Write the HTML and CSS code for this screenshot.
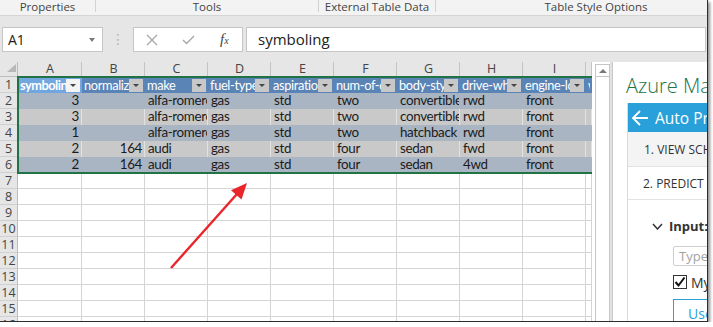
FILE: index.html
```html
<!DOCTYPE html>
<html lang="en">

<head>
  <meta charset="UTF-8">
  <title>Auto Price - Excel</title>
  <link rel="stylesheet" href="styles.css">
</head>

<body>
  <div class="window">
    <div class="groups">
      <span class="grp g1">Properties</span>
      <span class="grp g2">Tools</span>
      <span class="grp g3">External Table Data</span>
      <span class="grp g4">Table Style Options</span>
    </div>

    <div class="fbar">
      <div class="namebox"><span>A1</span><i class="caret"></i></div>
      <div class="dots">⋮</div>
      <div class="fbtns">
        <svg width="12" height="12" viewBox="0 0 12 12"><path d="M1 1L11 11M11 1L1 11" stroke="#a6a6a6" stroke-width="1.2" fill="none"/></svg>
        <svg width="13" height="10" viewBox="0 0 13 10"><path d="M1 5L4.5 8.5L12 1" stroke="#a6a6a6" stroke-width="1.3" fill="none"/></svg>
        <span class="fx">f<small>x</small></span>
      </div>
      <div class="finput">symboling</div>
    </div>

    <div class="main">
      <div class="sheet">
        <div class="row colhead">
          <div class="corner"></div>
          <div>A</div><div>B</div><div>C</div><div>D</div><div>E</div><div>F</div><div>G</div><div>H</div><div>I</div><div></div>
        </div>

        <div class="tbl">
          <div class="row thead">
            <div class="rh">1</div>
            <div class="th active"><span>symboling</span><b class="fb"></b></div>
            <div class="th"><span>normalized-losses</span><b class="fb"></b></div>
            <div class="th"><span>make</span><b class="fb"></b></div>
            <div class="th"><span>fuel-type</span><b class="fb"></b></div>
            <div class="th"><span>aspiration</span><b class="fb"></b></div>
            <div class="th"><span>num-of-doors</span><b class="fb"></b></div>
            <div class="th"><span>body-style</span><b class="fb"></b></div>
            <div class="th"><span>drive-wheels</span><b class="fb"></b></div>
            <div class="th"><span>engine-location</span><b class="fb"></b></div>
            <div class="th"><span>wheel-base</span></div>
          </div>
          <div class="row band1">
            <div class="rh">2</div>
            <div class="num">3</div><div class="num"></div><div>alfa-romero</div><div>gas</div><div>std</div><div>two</div><div>convertible</div><div>rwd</div><div>front</div><div></div>
          </div>
          <div class="row band2">
            <div class="rh">3</div>
            <div class="num">3</div><div class="num"></div><div>alfa-romero</div><div>gas</div><div>std</div><div>two</div><div>convertible</div><div>rwd</div><div>front</div><div></div>
          </div>
          <div class="row band1">
            <div class="rh">4</div>
            <div class="num">1</div><div class="num"></div><div>alfa-romero</div><div>gas</div><div>std</div><div>two</div><div>hatchback</div><div>rwd</div><div>front</div><div></div>
          </div>
          <div class="row band2">
            <div class="rh">5</div>
            <div class="num">2</div><div class="num">164</div><div>audi</div><div>gas</div><div>std</div><div>four</div><div>sedan</div><div>fwd</div><div>front</div><div></div>
          </div>
          <div class="row band1">
            <div class="rh">6</div>
            <div class="num">2</div><div class="num">164</div><div>audi</div><div>gas</div><div>std</div><div>four</div><div>sedan</div><div>4wd</div><div>front</div><div></div>
          </div>
        </div>

        <div class="row"><div class="rh">7</div><div></div><div></div><div></div><div></div><div></div><div></div><div></div><div></div><div></div><div></div></div>
        <div class="row"><div class="rh">8</div><div></div><div></div><div></div><div></div><div></div><div></div><div></div><div></div><div></div><div></div></div>
        <div class="row"><div class="rh">9</div><div></div><div></div><div></div><div></div><div></div><div></div><div></div><div></div><div></div><div></div></div>
        <div class="row"><div class="rh">10</div><div></div><div></div><div></div><div></div><div></div><div></div><div></div><div></div><div></div><div></div></div>
        <div class="row"><div class="rh">11</div><div></div><div></div><div></div><div></div><div></div><div></div><div></div><div></div><div></div><div></div></div>
        <div class="row"><div class="rh">12</div><div></div><div></div><div></div><div></div><div></div><div></div><div></div><div></div><div></div><div></div></div>
        <div class="row"><div class="rh">13</div><div></div><div></div><div></div><div></div><div></div><div></div><div></div><div></div><div></div><div></div></div>
        <div class="row"><div class="rh">14</div><div></div><div></div><div></div><div></div><div></div><div></div><div></div><div></div><div></div><div></div></div>
        <div class="row"><div class="rh">15</div><div></div><div></div><div></div><div></div><div></div><div></div><div></div><div></div><div></div><div></div></div>
        <div class="row"><div class="rh">16</div><div></div><div></div><div></div><div></div><div></div><div></div><div></div><div></div><div></div><div></div></div>

        <!-- red annotation arrow drawn over the sheet -->
        <svg class="arrow" width="100" height="100" viewBox="0 0 100 100">
          <line x1="11" y1="91" x2="77" y2="17" stroke="#e8262c" stroke-width="2.4"/>
          <polygon points="87,6 81.5,22.5 71,13.3" fill="#e8262c"/>
        </svg>
      </div>

      <div class="vscroll"><div class="up"></div></div>
      <div class="gutter"></div>

      <div class="pane">
        <div class="ptitle">Azure Machine Learning</div>
        <div class="pbox">
          <div class="phead">
            <svg width="18" height="18" viewBox="0 0 18 18"><path d="M17 9H2M9 2L2 9L9 16" stroke="#fff" stroke-width="1.8" fill="none"/></svg>
            <span>Auto Price Prediction</span>
          </div>
          <div class="tab tab-on">1. VIEW SCHEMA</div>
          <div class="tab">2. PREDICT</div>
          <div class="pbody">
            <div class="inp-h">
              <svg width="11" height="7" viewBox="0 0 11 7"><path d="M1 1L5.5 6L10 1" stroke="#333" stroke-width="1.5" fill="none"/></svg>
              <b>Input:</b><span>input1</span>
            </div>
            <div class="tbox">Type or paste</div>
            <div class="chk">
              <svg class="cb" width="14" height="14" viewBox="0 0 14 14"><rect x="0.5" y="0.5" width="13" height="13" fill="#fff" stroke="#333"/><path d="M2.5 7L5.5 10.5L11.5 2.5" stroke="#111" stroke-width="2" fill="none"/></svg>
              <span>My data has headers</span>
            </div>
            <div class="btn">Use sample data</div>
          </div>
        </div>
      </div>
    </div>
  </div>
</body>

</html>
```

FILE: styles.css
```css
* {
  box-sizing: border-box;
}

body {
  margin: 0;
  background: #fff;
  font-family: "Open Sans", "Noto Sans", sans-serif;
}

.window {
  width: 708px;
  height: 322px;
  border-right: 1px solid #2e2e2e;
  border-bottom: 1px solid #2e2e2e;
  box-shadow: 2px 2px 3px rgba(0, 0, 0, 0.45);
  background: #e6e6e6;
  overflow: hidden;
  display: flex;
  flex-direction: column;
}

/* ribbon group captions */
.groups {
  display: flex;
  height: 16px;
  background: #f3f3f3;
  border-bottom: 1px solid #d5d5d5;
  font-size: 11.5px;
  color: #444;
  white-space: nowrap;
  flex: none;
}

.grp {
  height: 12px;
  line-height: 13px;
  text-align: center;
  border-right: 1px solid #d2d2d2;
  flex: none;
}

.g1 { width: 96px; }
.g2 { width: 223px; }
.g3 { width: 117px; }
.g4 { width: 320px; border-right: 0; }

/* formula bar */
.fbar {
  display: flex;
  height: 46px;
  padding: 11px 1px 10px 2px;
  flex: none;
}

.namebox {
  width: 101px;
  background: #fff;
  border: 1px solid #c6c6c6;
  display: flex;
  align-items: center;
  justify-content: space-between;
  padding: 0 7px 0 5px;
  font-size: 14px;
  color: #222;
}

.caret {
  border-left: 3.5px solid transparent;
  border-right: 3.5px solid transparent;
  border-top: 4px solid #7a7a7a;
}

.dots {
  width: 30px;
  text-align: center;
  color: #b4b4b4;
  font-family: "DejaVu Sans", sans-serif;
  font-size: 14px;
  line-height: 25px;
}

.fbtns {
  width: 110px;
  background: #fff;
  border: 1px solid #c6c6c6;
  display: flex;
  align-items: center;
  gap: 24px;
  padding-left: 12px;
}

.fx {
  font-family: "Liberation Serif", serif;
  font-style: italic;
  font-size: 15px;
  color: #444;
  margin-left: 1px;
}

.fx small {
  font-size: 10px;
}

.finput {
  flex: 1;
  margin-left: 3px;
  background: #fff;
  border: 1px solid #c6c6c6;
  padding-left: 11px;
  font-size: 15px;
  line-height: 23px;
  color: #222;
}

/* sheet area */
.main {
  flex: 1;
  display: flex;
  background: #fff;
  min-height: 0;
}

.sheet {
  width: 592px;
  flex: none;
  position: relative;
  overflow: hidden;
}

.row {
  display: grid;
  grid-template-columns: 18px 64px repeat(8, 63px) 1fr;
  height: 16px;
  font-family: Lato, "Liberation Sans", sans-serif;
  font-size: 13.4px;
  letter-spacing: -0.35px;
  line-height: 15px;
  color: #1b1b1b;
}

.row > div {
  border-right: 1px solid #d4d4d4;
  border-bottom: 1px solid #d4d4d4;
  padding: 0 2px 0 3px;
  white-space: nowrap;
  overflow: hidden;
}

.row > .rh {
  background: #e6e6e6;
  border-right-color: #bdbdbd;
  border-bottom-color: #cfcfcf;
  padding: 0;
  text-align: center;
  font-family: "Open Sans", "Noto Sans", sans-serif;
  font-size: 12.5px;
  letter-spacing: 0;
  color: #444;
}

.colhead {
  height: 15px;
  background: #e6e6e6;
}

.colhead > div {
  border-right-color: #c4c4c4;
  border-bottom-color: #bdbdbd;
  text-align: center;
  font-family: "Open Sans", "Noto Sans", sans-serif;
  font-size: 12.5px;
  letter-spacing: 0;
  line-height: 14px;
  color: #444;
}

.colhead > .corner {
  position: relative;
  border-right-color: #bdbdbd;
}

.corner::after {
  content: "";
  position: absolute;
  right: 1px;
  bottom: 4px;
  border-left: 9px solid transparent;
  border-bottom: 8px solid #b8b8b8;
}

/* the table block with its selection border */
.tbl {
  position: relative;
}

.tbl::after {
  content: "";
  position: absolute;
  left: 17px;
  right: -10px;
  top: -1px;
  bottom: -1px;
  border: 2px solid #217346;
}

.tbl .row > div:not(.rh) {
  border-bottom: 0;
}

.thead > .th {
  background: #5a84b5;
  border-right-color: #5a84b5;
  color: #fff;
  display: flex;
  align-items: center;
  padding: 0 1px 0 2px;
  font-size: 12.8px;
}

.thead > .th.active {
  background: #72a6df;
  border-right-color: #72a6df;
  font-weight: bold;
  letter-spacing: -0.5px;
}

.th span {
  flex: 1;
  overflow: hidden;
}

.fb {
  width: 14px;
  height: 13px;
  flex: none;
  background: #c8c8c8;
  display: flex;
  align-items: center;
  justify-content: center;
}

.fb::after {
  content: "";
  border-left: 3px solid transparent;
  border-right: 3px solid transparent;
  border-top: 3px solid #444;
  margin-top: 1px;
}

.active .fb {
  background: #f3f3f3;
}

.band1 > div:not(.rh) {
  background: #aab5c3;
  border-right-color: #aab5c3;
}

.band2 > div:not(.rh) {
  background: #c9c9c9;
  border-right-color: #e2e2e2;
}

.row > .num {
  text-align: right;
}

.arrow {
  position: absolute;
  left: 160px;
  top: 115px;
}

/* vertical scrollbar */
.vscroll {
  width: 15px;
  margin: 2px 0 0 3px;
  border: 1px solid #c6c6c6;
  border-bottom: 0;
  background: #fff;
  flex: none;
}

.up {
  height: 12px;
  border-bottom: 1px solid #c6c6c6;
  display: flex;
  justify-content: center;
  align-items: center;
}

.up::after {
  content: "";
  border-left: 4px solid transparent;
  border-right: 4px solid transparent;
  border-bottom: 4px solid #7a7a7a;
}

.gutter {
  width: 3px;
  background: #e3e3e3;
  border-right: 1px solid #c8c8c8;
  flex: none;
}

/* add-in task pane */
.pane {
  flex: 1;
  overflow: hidden;
  white-space: nowrap;
  background: #fff;
}

.ptitle {
  height: 41px;
  padding: 12px 0 0 13px;
  font-size: 20px;
  line-height: 24px;
  font-weight: 300;
  color: #217346;
}

.pbox {
  margin-left: 14px;
  width: 200px;
  height: 230px;
  border-left: 1px solid #dadada;
}

.phead {
  height: 29px;
  background: #2aa0da;
  color: #fff;
  display: flex;
  align-items: center;
  gap: 6px;
  padding-left: 3px;
  font-size: 15.5px;
}

.tab {
  height: 33px;
  padding-left: 15px;
  font-size: 12px;
  line-height: 33px;
  color: #333;
  border-bottom: 1px solid #e2e2e2;
}

.tab-on {
  height: 35px;
  line-height: 35px;
  background: #f4f4f4;
  padding-left: 16px;
}

.pbody {
  padding: 18px 0 0 24px;
  font-size: 13px;
  color: #333;
}

.inp-h {
  display: flex;
  align-items: center;
  gap: 6px;
  height: 16px;
}

.inp-h span {
  margin-left: -2px;
}

.tbox {
  margin: 12px 0 0 21px;
  height: 20px;
  border: 1px solid #cfcfcf;
  border-radius: 2px;
  padding-left: 5px;
  line-height: 18px;
  color: #a3a3a3;
}

.chk {
  margin: 9px 0 0 21px;
  height: 14px;
  display: flex;
  align-items: center;
  gap: 4px;
  font-size: 14px;
}

.cb {
  flex: none;
}

.btn {
  margin: 10px 0 0 21px;
  height: 30px;
  border: 1px solid #2aa0da;
  padding-left: 14px;
  line-height: 28px;
  font-size: 14px;
  color: #2aa0da;
}
```
